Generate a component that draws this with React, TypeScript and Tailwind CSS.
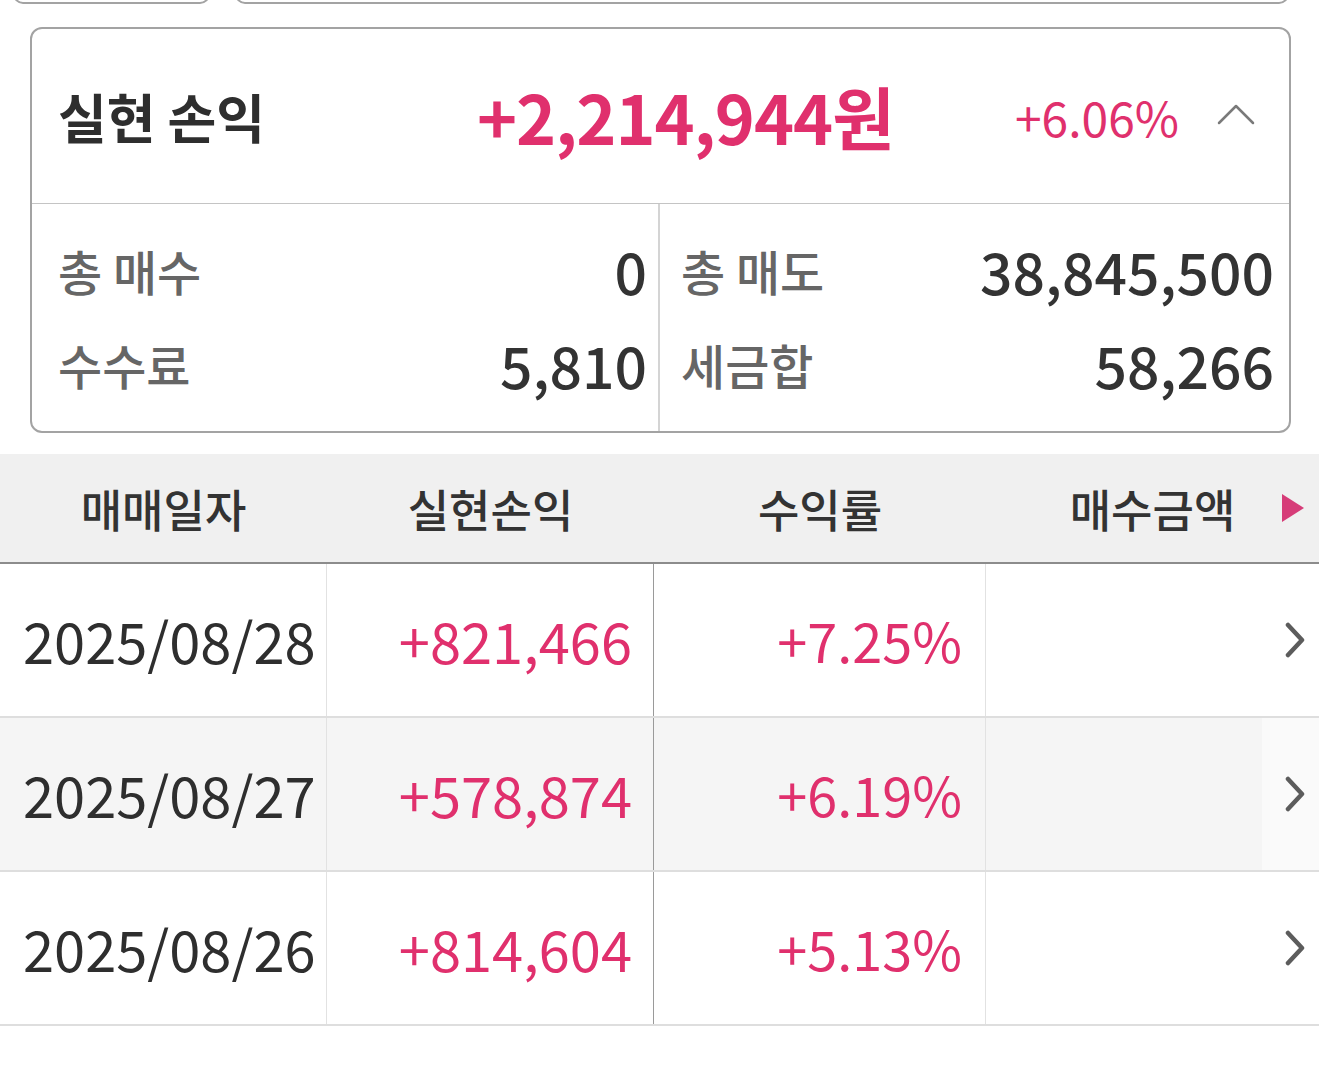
import React from "react";

const PINK = "text-[#e0306d]";

function ChevronRight() {
  return (
    <svg width="22" height="36" viewBox="0 0 22 36" fill="none">
      <polyline points="4,3 18,18 4,33" stroke="#5c5c5c" strokeWidth="4.5" strokeLinecap="round" strokeLinejoin="round" />
    </svg>
  );
}

function ChevronUp() {
  return (
    <svg width="38" height="24" viewBox="0 0 38 24" fill="none">
      <polyline points="2,21 19,4 36,21" stroke="#7a7a7a" strokeWidth="2.5" strokeLinecap="round" strokeLinejoin="round" />
    </svg>
  );
}

const rows = [
  { date: "2025/08/28", pl: "+821,466", rate: "+7.25%", alt: false },
  { date: "2025/08/27", pl: "+578,874", rate: "+6.19%", alt: true },
  { date: "2025/08/26", pl: "+814,604", rate: "+5.13%", alt: false },
];

export default function App() {
  return (
    <div
      className="w-[1319px] h-[1073px] bg-white overflow-hidden"
      style={{ fontFamily: '"Noto Sans CJK KR", "Noto Sans", sans-serif' }}
    >
      {/* top partial inputs */}
      <div className="flex mt-[-37px] h-[41px]">
        <div className="ml-[13px] w-[197px] h-[41px] border-2 border-[#a3a3a3] rounded-[10px]" />
        <div className="ml-[25px] w-[1054px] h-[41px] border-2 border-[#a3a3a3] rounded-[10px]" />
      </div>

      {/* summary card */}
      <div className="ml-[30px] mt-[23px] w-[1261px] border-2 border-[#a3a3a3] rounded-[12px] overflow-hidden">
        <div className="h-[174px] flex items-center">
          <div className="w-[445px] pl-[26px] text-[53px] font-bold text-[#2e2e2e] leading-none">
            실현 손익
          </div>
          <div className={`flex-1 text-[68px] font-bold ${PINK} leading-none tracking-[-1px]`}>
            +2,214,944원
          </div>
          <div className={`text-[48px] ${PINK} leading-none`}>+6.06%</div>
          <div className="ml-[38px] mr-[34px] mt-[-4px]">
            <ChevronUp />
          </div>
        </div>
        <div className="border-t border-[#c4c4c4] grid grid-cols-[628px_1fr]">
          <div className="border-r-2 border-[#d4d4d4] pt-[19px] pb-[20px] pl-[26px] pr-[11px]">
            <div className="h-[94px] flex items-center justify-between">
              <span className="text-[48px] font-medium text-[#666] leading-none">총 매수</span>
              <span className="text-[57px] font-medium text-[#333] leading-none">0</span>
            </div>
            <div className="h-[94px] flex items-center justify-between">
              <span className="text-[48px] font-medium text-[#666] leading-none">수수료</span>
              <span className="text-[57px] font-medium text-[#333] leading-none">5,810</span>
            </div>
          </div>
          <div className="pt-[19px] pb-[20px] pl-[21px] pr-[15px]">
            <div className="h-[94px] flex items-center justify-between">
              <span className="text-[48px] font-medium text-[#666] leading-none">총 매도</span>
              <span className="text-[57px] font-medium text-[#333] leading-none">38,845,500</span>
            </div>
            <div className="h-[94px] flex items-center justify-between">
              <span className="text-[48px] font-medium text-[#666] leading-none">세금합</span>
              <span className="text-[57px] font-medium text-[#333] leading-none">58,266</span>
            </div>
          </div>
        </div>
      </div>

      {/* table */}
      <div className="mt-[21px]">
        <div className="h-[110px] bg-[#f0f0f0] border-b-2 border-[#8c8c8c] grid grid-cols-[327px_327px_332px_1fr] items-center">
          <div className="text-center text-[45px] font-medium text-[#333] leading-none">매매일자</div>
          <div className="text-center text-[45px] font-medium text-[#333] leading-none">실현손익</div>
          <div className="text-center text-[45px] font-medium text-[#333] leading-none">수익률</div>
          <div className="relative text-center text-[45px] font-medium text-[#333] leading-none">
            매수금액
            <svg className="absolute right-[13px] top-1/2 -translate-y-1/2" width="26" height="32" viewBox="0 0 26 32">
              <polygon points="2,2 24,16 2,30" fill="#d63c78" />
            </svg>
          </div>
        </div>
        {rows.map((r) => (
          <div
            key={r.date}
            className={`h-[154px] grid grid-cols-[327px_327px_332px_1fr] border-b-2 border-[#dedede] ${r.alt ? "bg-[#f5f5f5]" : "bg-white"}`}
          >
            <div className="border-r border-[#e2e2e2] flex items-center pl-[23px] text-[56px] text-[#2e2e2e] leading-none">
              {r.date}
            </div>
            <div className={`border-r border-[#9a9a9a] flex items-center justify-end pr-[21px] text-[56px] ${PINK} leading-none`}>
              {r.pl}
            </div>
            <div className={`border-r border-[#e2e2e2] flex items-center justify-end pr-[23px] text-[54px] ${PINK} leading-none`}>
              {r.rate}
            </div>
            <div className="flex items-stretch justify-end">
              <div className={`w-[57px] flex items-center justify-end pr-[13px] ${r.alt ? "bg-[#fafafa]" : ""}`}>
                <ChevronRight />
              </div>
            </div>
          </div>
        ))}
      </div>
    </div>
  );
}
